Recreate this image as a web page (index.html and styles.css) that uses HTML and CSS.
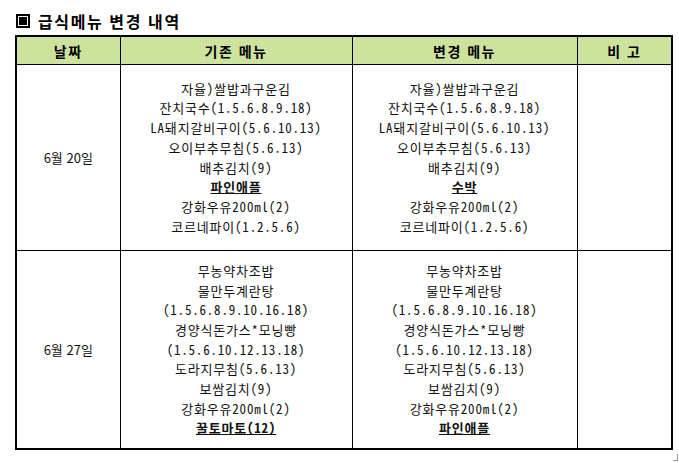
FILE: index.html
```html
<!DOCTYPE html>
<html lang="ko">
<head>
<meta charset="utf-8">
<link rel="stylesheet" href="styles.css">
</head>
<body>
<div class="page">
  <h1 class="title"><span class="box-icon"><span class="box-inner"></span></span>급식메뉴 변경 내역</h1>
  <table class="menu">
    <colgroup>
      <col class="c-date"><col class="c-old"><col class="c-new"><col class="c-note">
    </colgroup>
    <thead>
      <tr class="head"><th>날짜</th><th>기존 메뉴</th><th>변경 메뉴</th><th>비 고</th></tr>
    </thead>
    <tbody>
      <tr class="r1">
        <td class="date">6월 20일</td>
        <td>자율)쌀밥과구운김<br>잔치국수(1.5.6.8.9.18)<br>LA돼지갈비구이(5.6.10.13)<br>오이부추무침(5.6.13)<br>배추김치(9)<br><b class="em">파인애플</b><br>강화우유200ml(2)<br>코르네파이(1.2.5.6)</td>
        <td>자율)쌀밥과구운김<br>잔치국수(1.5.6.8.9.18)<br>LA돼지갈비구이(5.6.10.13)<br>오이부추무침(5.6.13)<br>배추김치(9)<br><b class="em">수박</b><br>강화우유200ml(2)<br>코르네파이(1.2.5.6)</td>
        <td></td>
      </tr>
      <tr class="r2">
        <td class="date">6월 27일</td>
        <td>무농약차조밥<br>물만두계란탕<br>(1.5.6.8.9.10.16.18)<br>경양식돈가스*모닝빵<br>(1.5.6.10.12.13.18)<br>도라지무침(5.6.13)<br>보쌈김치(9)<br>강화우유200ml(2)<br><b class="em">꿀토마토(12)</b></td>
        <td>무농약차조밥<br>물만두계란탕<br>(1.5.6.8.9.10.16.18)<br>경양식돈가스*모닝빵<br>(1.5.6.10.12.13.18)<br>도라지무침(5.6.13)<br>보쌈김치(9)<br>강화우유200ml(2)<br><b class="em">파인애플</b></td>
        <td></td>
      </tr>
    </tbody>
  </table>
  <div class="corner-row"><span class="corner"></span></div>
</div>
</body>
</html>
```
FILE: styles.css
```css
html, body {
  margin: 0;
  padding: 0;
  background: #fff;
}
body {
  font-family: "Noto Sans CJK KR", "Noto Sans", sans-serif;
  color: #111;
}
.page {
  padding: 12px 0 0 15px;
  width: 664px;
}
.title {
  display: flex;
  align-items: center;
  gap: 8px;
  margin: 0 0 5px 1px;
  height: 18px;
  font-size: 16px;
  font-weight: bold;
  line-height: 18px;
  letter-spacing: 1.6px;
  color: #000;
}
.box-icon {
  width: 8px;
  height: 8px;
  border: 2px solid #000;
  padding: 1px;
  display: flex;
}
.box-inner {
  flex: 1;
  background: #000;
}
.menu {
  width: 656px;
  border-collapse: collapse;
  border: 2.5px solid #000;
  table-layout: fixed;
}
.c-date { width: 104px; }
.c-old { width: 232px; }
.c-new { width: 225px; }
.c-note { width: 95px; }
.menu th, .menu td {
  border: 1px solid #000;
  padding: 0;
  text-align: center;
  vertical-align: middle;
}
.head th {
  background: #cde29c;
  height: 27px;
  font-size: 14px;
  font-weight: bold;
  letter-spacing: 1.5px;
  color: #000;
  border-bottom: 1.5px solid #000;
}
.menu td {
  font-size: 13px;
  line-height: 19.7px;
  letter-spacing: 0.8px;
  font-feature-settings: "hwid";
}
.r1 td { height: 185px; }
.r2 td { height: 197px; }
.menu td.date {
  letter-spacing: 0;
  font-feature-settings: normal;
}
.em {
  font-weight: bold;
  text-decoration: underline;
}
.corner-row {
  display: flex;
  justify-content: flex-end;
  margin-top: 4px;
  width: 663px;
}
.corner {
  width: 4px;
  height: 6px;
  border-right: 1px solid #999;
  border-bottom: 1px solid #999;
}
```
